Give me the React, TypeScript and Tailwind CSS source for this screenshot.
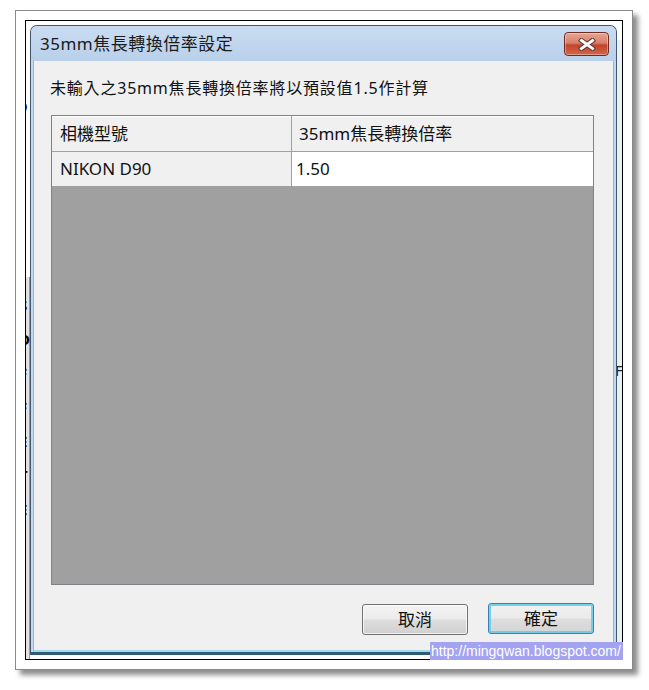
import React from "react";

const FONT = { fontFamily: '"Noto Sans", "Noto Sans CJK TC", sans-serif' };

function CloseButton() {
  return (
    <div className="w-[45px] h-[24px] rounded-[4px] border border-[#6e2b22] overflow-hidden flex flex-col items-center justify-center relative bg-[linear-gradient(to_bottom,#e6a594_0%,#d9806b_45%,#c2442c_55%,#d2664b_100%)] shadow-[inset_0_0_0_1px_rgba(255,255,255,0.35)]">
      <svg width="18" height="13" viewBox="0 0 18 13">
        <g strokeLinecap="square">
          <line x1="3.5" y1="2.5" x2="14.5" y2="10.5" stroke="#5a3a36" strokeWidth="5" />
          <line x1="14.5" y1="2.5" x2="3.5" y2="10.5" stroke="#5a3a36" strokeWidth="5" />
          <line x1="3.5" y1="2.5" x2="14.5" y2="10.5" stroke="#ffffff" strokeWidth="3" />
          <line x1="14.5" y1="2.5" x2="3.5" y2="10.5" stroke="#ffffff" strokeWidth="3" />
        </g>
      </svg>
    </div>
  );
}

function LeftStrip() {
  const glyphs = ["S", "D", "F", "F", "E", "T", "E", "I"];
  return (
    <div className="w-[4px] h-full overflow-hidden bg-white flex flex-col">
      <div className="h-[78px] shrink-0" />
      <div className="h-[16px] shrink-0 w-[12px] -ml-[6px] text-[13px] leading-[16px] text-black">9</div>
      <div className="h-[162px] shrink-0" />
      <div className="flex-1 bg-[#e2e2e2] border-r border-[#9a9a9a] flex flex-col pt-[20px]">
        {glyphs.map((g, i) => (
          <div
            key={i}
            className="h-[34px] shrink-0 w-[12px] -ml-[7px] text-[15px] leading-[16px] font-bold text-black"
          >
            {g}
          </div>
        ))}
      </div>
    </div>
  );
}

function RightStrip() {
  return (
    <div className="w-[5px] h-full overflow-hidden flex flex-col">
      <div className="h-[19px] bg-white shrink-0" />
      <div className="flex-1 bg-[#e9eff7] flex flex-col">
        <div className="h-[322px] shrink-0" />
        <div className="text-[15px] leading-[16px] text-[#222] -ml-[2px]">FE</div>
      </div>
    </div>
  );
}

export default function App() {
  return (
    <div className="w-[649px] h-[690px] bg-white pt-[10px] pl-[15px]" style={FONT}>
      <div className="w-[618px] h-[660px] border border-[#8a8a8a] bg-white shadow-[5px_5px_5px_rgba(0,0,0,0.45)] pt-[9px] pl-[9px]">
        <div className="w-[598px] h-[640px] border border-black relative flex">
          <LeftStrip />
          {/* Window */}
          <div className="w-[587px] mt-[4px] h-[630px] flex flex-col rounded-t-[7px] border border-[#44586d] border-b-0 bg-[#bfd6ef] overflow-hidden">
            {/* Title bar */}
            <div className="h-[35px] shrink-0 flex items-start justify-between pl-[9px] pr-[7px] bg-[linear-gradient(to_bottom,#c9dcf1,#b9d0ea)]">
              <div className="h-[35px] flex items-center text-[17px] tracking-[0.5px] text-[#1a1a1a]">
                35mm焦長轉換倍率設定
              </div>
              <div className="pt-[6px]">
                <CloseButton />
              </div>
            </div>
            {/* Body frame */}
            <div className="flex-1 flex flex-col px-[2px] bg-[#c3d9f0] border-b-[3px] border-[#2f5b73]">
              <div className="flex-1 flex flex-col bg-[#f0f0f0] border-l border-r border-[#9fb4ca] border-b-[2px] border-b-[#9fdcef] pl-[16px] pr-[19px]">
                <div className="h-[22px] mt-[16px] leading-[22px] text-[16px] tracking-[0.8px] text-[#111]">
                  未輸入之35mm焦長轉換倍率將以預設值1.5作計算
                </div>
                <div className="mt-[16px] ml-[1px] h-[470px] border border-[#7f8388] bg-[#a0a0a0] flex flex-col">
                  <div className="h-[36px] flex border-b border-[#a0a0a0] bg-[#f0f0f0]">
                    <div className="w-[240px] border-r border-[#a0a0a0] flex items-center pl-[8px] text-[17px] text-[#111] shadow-[inset_0_1px_0_#ffffff]">
                      相機型號
                    </div>
                    <div className="flex-1 flex items-center pl-[7px] text-[17px] text-[#111] shadow-[inset_0_1px_0_#ffffff]">
                      35mm焦長轉換倍率
                    </div>
                  </div>
                  <div className="h-[35px] flex border-b border-[#a0a0a0]">
                    <div className="w-[240px] border-r border-[#a0a0a0] bg-[#f0f0f0] flex items-center pl-[8px] text-[17px] text-[#111]">
                      NIKON D90
                    </div>
                    <div className="flex-1 bg-white flex items-center pl-[4px] text-[17px] text-[#111]">
                      1.50
                    </div>
                  </div>
                </div>
                <div className="mt-[19px] flex justify-end gap-[20px]">
                  <button className="w-[106px] h-[31px] rounded-[3px] border border-[#707070] bg-[linear-gradient(to_bottom,#f4f4f4_0%,#ebebeb_48%,#dddddd_52%,#d0d0d0_100%)] text-[17px] text-[#111] shadow-[inset_0_0_0_1px_rgba(255,255,255,0.7)]">
                    取消
                  </button>
                  <button className="w-[106px] h-[31px] -mt-[1px] rounded-[3px] border border-[#3c7fb1] bg-[linear-gradient(to_bottom,#f2f2f2_0%,#ebebeb_48%,#dedede_52%,#d4d4d4_100%)] text-[17px] text-[#111] shadow-[inset_0_0_0_2px_rgba(100,200,235,0.85)]">
                    確定
                  </button>
                </div>
              </div>
            </div>
          </div>
          <RightStrip />
          <div
            className="absolute right-[-1px] bottom-[-1px] w-[193px] h-[18px] bg-[#a3a3f2] text-white text-[14px] leading-[18px] pl-[1px] whitespace-nowrap overflow-hidden"
            style={{ fontFamily: '"Liberation Sans", Arial, sans-serif' }}
          >
            http://mingqwan.blogspot.com/
          </div>
        </div>
      </div>
    </div>
  );
}
